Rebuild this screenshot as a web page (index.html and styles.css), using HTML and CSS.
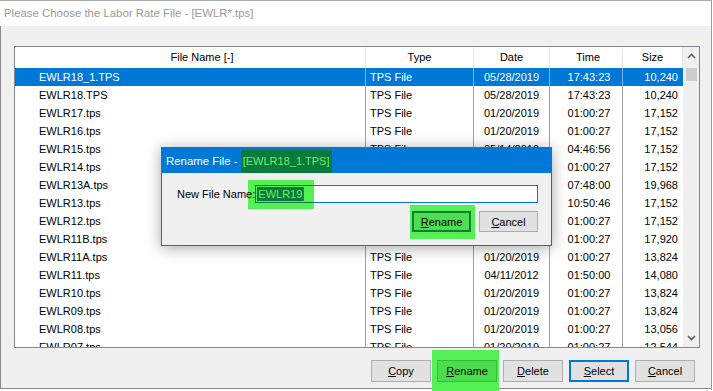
FILE: index.html
```html
<!DOCTYPE html>
<html lang="en">
<head>
    <meta charset="UTF-8">
    <title>Please Choose the Labor Rate File</title>
    <link rel="stylesheet" href="styles.css">
</head>
<body>
    <div class="window">
        <div class="titlebar">Please Choose the Labor Rate File - [EWLR*.tps]</div>
        <div class="window-body">
            <div class="listview">
                <div class="list-main">
                    <div class="row head">
                        <div class="c name">File Name [-]</div>
                        <div class="c type">Type</div>
                        <div class="c date">Date</div>
                        <div class="c time">Time</div>
                        <div class="c size">Size</div>
                    </div>
                    <div class="rows">
                        <div class="row selected"><div class="c name">EWLR18_1.TPS</div><div class="c type">TPS File</div><div class="c date">05/28/2019</div><div class="c time">17:43:23</div><div class="c size">10,240</div></div>
                        <div class="row"><div class="c name">EWLR18.TPS</div><div class="c type">TPS File</div><div class="c date">05/28/2019</div><div class="c time">17:43:23</div><div class="c size">10,240</div></div>
                        <div class="row"><div class="c name">EWLR17.tps</div><div class="c type">TPS File</div><div class="c date">01/20/2019</div><div class="c time">01:00:27</div><div class="c size">17,152</div></div>
                        <div class="row"><div class="c name">EWLR16.tps</div><div class="c type">TPS File</div><div class="c date">01/20/2019</div><div class="c time">01:00:27</div><div class="c size">17,152</div></div>
                        <div class="row"><div class="c name">EWLR15.tps</div><div class="c type">TPS File</div><div class="c date">05/14/2019</div><div class="c time">04:46:56</div><div class="c size">17,152</div></div>
                        <div class="row"><div class="c name">EWLR14.tps</div><div class="c type">TPS File</div><div class="c date">01/20/2019</div><div class="c time">01:00:27</div><div class="c size">17,152</div></div>
                        <div class="row"><div class="c name">EWLR13A.tps</div><div class="c type">TPS File</div><div class="c date">01/20/2019</div><div class="c time">07:48:00</div><div class="c size">19,968</div></div>
                        <div class="row"><div class="c name">EWLR13.tps</div><div class="c type">TPS File</div><div class="c date">01/20/2019</div><div class="c time">10:50:46</div><div class="c size">17,152</div></div>
                        <div class="row"><div class="c name">EWLR12.tps</div><div class="c type">TPS File</div><div class="c date">01/20/2019</div><div class="c time">01:00:27</div><div class="c size">17,152</div></div>
                        <div class="row"><div class="c name">EWLR11B.tps</div><div class="c type">TPS File</div><div class="c date">01/20/2019</div><div class="c time">01:00:27</div><div class="c size">17,920</div></div>
                        <div class="row"><div class="c name">EWLR11A.tps</div><div class="c type">TPS File</div><div class="c date">01/20/2019</div><div class="c time">01:00:27</div><div class="c size">13,824</div></div>
                        <div class="row"><div class="c name">EWLR11.tps</div><div class="c type">TPS File</div><div class="c date">04/11/2012</div><div class="c time">01:50:00</div><div class="c size">14,080</div></div>
                        <div class="row"><div class="c name">EWLR10.tps</div><div class="c type">TPS File</div><div class="c date">01/20/2019</div><div class="c time">01:00:27</div><div class="c size">13,824</div></div>
                        <div class="row"><div class="c name">EWLR09.tps</div><div class="c type">TPS File</div><div class="c date">01/20/2019</div><div class="c time">01:00:27</div><div class="c size">13,824</div></div>
                        <div class="row"><div class="c name">EWLR08.tps</div><div class="c type">TPS File</div><div class="c date">01/20/2019</div><div class="c time">01:00:27</div><div class="c size">13,056</div></div>
                        <div class="row"><div class="c name">EWLR07.tps</div><div class="c type">TPS File</div><div class="c date">01/20/2019</div><div class="c time">01:00:27</div><div class="c size">12,544</div></div>
                    </div>
                </div>
                <div class="scrollbar">
                    <div class="sb-btn">
                        <svg width="9" height="6" viewBox="0 0 9 6"><path d="M1 5 L4.5 1.5 L8 5" fill="none" stroke="#606060" stroke-width="1.6"/></svg>
                    </div>
                    <div class="sb-thumb"></div>
                    <div class="sb-track"></div>
                    <div class="sb-btn">
                        <svg width="9" height="6" viewBox="0 0 9 6"><path d="M1 1 L4.5 4.5 L8 1" fill="none" stroke="#606060" stroke-width="1.6"/></svg>
                    </div>
                </div>
            </div>

            <div class="button-row">
                <button class="btn"><u>C</u>opy</button>
                <span class="mark-bottom"><button class="btn btn-marked"><u>R</u>ename</button></span>
                <button class="btn"><u>D</u>elete</button>
                <button class="btn btn-default"><u>S</u>elect</button>
                <button class="btn"><u>C</u>ancel</button>
            </div>
        </div>

        <div class="dialog">
            <div class="dialog-title">
                <span>Rename File -&nbsp;</span><span class="title-mark">[EWLR18_1.TPS]</span>
            </div>
            <div class="dialog-body">
                <div class="field">
                    <span class="label">New File Name:</span>
                    <div class="input">
                        <span class="input-mark"></span>
                        <span class="input-mark-edge"></span>
                        <span class="sel">EWLR19</span><span class="caret"></span>
                    </div>
                </div>
                <div class="dialog-buttons">
                    <span class="mark-dialog"><button class="btn btn-focus"><u>R</u>ename</button></span>
                    <button class="btn"><u>C</u>ancel</button>
                </div>
            </div>
        </div>
    </div>
</body>
</html>
```

FILE: styles.css
```css
* {
    margin: 0;
    padding: 0;
    box-sizing: border-box;
}

body {
    width: 713px;
    height: 391px;
    overflow: hidden;
    background: #fff;
    font-family: 'Liberation Sans', Arial, sans-serif;
    font-size: 11px;
    color: #000;
}

.window {
    position: relative;
    width: 712px;
    height: 390px;
    border-top: 1px solid #aaa;
    border-right: 1px solid #999;
}

.titlebar {
    height: 25px;
    line-height: 25px;
    padding-left: 4px;
    background: #fff;
    color: #9a9a9a;
    font-size: 11.4px;
    white-space: nowrap;
}

.window-body {
    height: 363px;
    background: #f0f0f0;
    border-left: 1px solid #8a8a8a;
    border-bottom: 1px solid #8a8a8a;
    padding: 20px 0 0 13px;
}

.listview {
    width: 686px;
    height: 302px;
    border: 1px solid #828790;
    background: #fff;
    display: flex;
    overflow: hidden;
}

.list-main {
    width: 668px;
    display: flex;
    flex-direction: column;
    overflow: hidden;
}

.row {
    display: grid;
    grid-template-columns: 351px 108px 76px 73px 60px;
    height: 18px;
    line-height: 18px;
    white-space: nowrap;
}

.row .c {
    border-right: 1px solid #a0a0a0;
    overflow: hidden;
}

.row .c.size {
    border-right: none;
}

.row.head {
    height: 21px;
    line-height: 21px;
    flex-shrink: 0;
}

.row.head .c {
    border-right: 1px solid #e5e5e5;
    text-align: center;
}

.row.head .c.name {
    padding-left: 24px;
}

.row.head .c.type {
    padding-left: 0;
}

.row.head .c.time {
    padding-left: 4px;
}

.row.head .c.size {
    padding-right: 0;
    text-align: center;
}

.rows {
    overflow: hidden;
}

.c.name {
    padding-left: 24px;
}

.c.type {
    padding-left: 4px;
}

.c.date {
    text-align: center;
}

.c.time {
    text-align: center;
    padding-left: 6px;
}

.c.size {
    text-align: right;
    padding-right: 5px;
}

.row.selected {
    background: #0078d7;
    color: #fff;
}

.row.selected .c {
    border-right-color: #7fb4e6;
}

.row.selected .c.size {
    border-right: none;
}

.scrollbar {
    width: 16px;
    background: #f0f0f0;
    display: flex;
    flex-direction: column;
}

.sb-btn {
    height: 18px;
    display: flex;
    align-items: center;
    justify-content: center;
}

.sb-thumb {
    height: 13px;
    margin: 3px 2px 0 3px;
    background: #cdcdcd;
}

.sb-track {
    flex: 1;
}

.button-row {
    display: flex;
    justify-content: flex-end;
    gap: 6px;
    margin-top: 12px;
    padding-right: 16px;
}

.btn {
    width: 60px;
    height: 22px;
    background: #e1e1e1;
    border: 1px solid #adadad;
    font-family: 'Liberation Sans', Arial, sans-serif;
    font-size: 11px;
    color: #000;
}

.btn-default {
    border: 2px solid #0078d7;
}

.mark-bottom {
    display: flex;
    background: #55f055;
    padding: 10px 2px 10px 5px;
    margin: -10px -2px -10px -5px;
}

.btn-marked {
    background: #4cdd4c;
    border-color: #3cb83c;
}

.dialog {
    position: absolute;
    left: 161px;
    top: 146px;
    width: 391px;
    height: 99px;
    background: #f0f0f0;
    border: 1px solid #0078d7;
    box-shadow: 0 2px 14px rgba(0, 0, 0, 0.35);
}

.dialog-title {
    height: 25px;
    background: #0078d7;
    color: #fff;
    font-size: 11.4px;
    padding-left: 4px;
    display: flex;
    align-items: center;
    white-space: nowrap;
}

.title-mark {
    background: #0b7a3c;
    color: #66f066;
    font-size: 11px;
    height: 23px;
    line-height: 23px;
    margin-top: 1px;
    padding: 0 2px;
}

.dialog-body {
    padding: 12px 13px 0 15px;
}

.field {
    display: flex;
    align-items: center;
}

.label {
    position: relative;
    z-index: 1;
    width: 79px;
}

.input {
    position: relative;
    width: 285px;
    height: 18px;
    background: #fff;
    border: 1px solid #0078d7;
    padding-left: 1px;
    display: flex;
    align-items: center;
}

.input-mark {
    position: absolute;
    left: -8px;
    top: -6px;
    width: 66px;
    height: 29px;
    background: #55f055;
}

.input-mark-edge {
    position: absolute;
    left: -1px;
    top: -1px;
    width: 59px;
    height: 18px;
    border: 1px solid #0b7a3c;
    border-right: none;
}

.sel {
    position: relative;
    background: #0b7a3c;
    color: #66f066;
    height: 14px;
    line-height: 14px;
    padding: 0 1px;
}

.caret {
    position: relative;
    width: 1px;
    height: 14px;
    background: #8a5a10;
}

.dialog-buttons {
    display: flex;
    justify-content: flex-end;
    gap: 8px;
    margin-top: 8px;
}

.dialog-buttons .btn {
    width: 59px;
    height: 21px;
}

.mark-dialog {
    display: flex;
    background: #55f055;
    padding: 6px 4px 7px 2px;
    margin: -6px -4px -7px -2px;
}

.btn-focus {
    background: #4ede4e;
    border: 2px solid #137b3e;
}
```
